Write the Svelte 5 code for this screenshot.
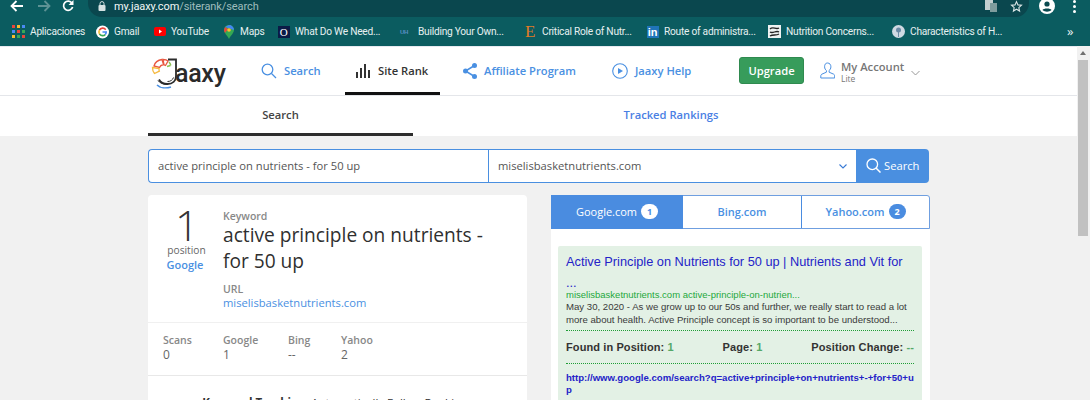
<script>
  const bookmarks = [
    { key: 'apps', label: 'Aplicaciones', w: 84 },
    { key: 'gmail', label: 'Gmail', w: 57 },
    { key: 'yt', label: 'YouTube', w: 69 },
    { key: 'maps', label: 'Maps', w: 55 },
    { key: 'o', label: 'What Do We Need...', w: 123 },
    { key: 'uh', label: 'Building Your Own...', w: 124 },
    { key: 'e', label: 'Critical Role of Nutr...', w: 122 },
    { key: 'in', label: 'Route of administra...', w: 122 },
    { key: 'nc', label: 'Nutrition Concerns...', w: 124 },
    { key: 'ch', label: 'Characteristics of H...', w: 112 }
  ];
</script>

<div class="page">
  <div class="chrome">
    <div class="addr-row">
      <svg class="nav back" width="14" height="12" viewBox="0 0 14 12"><path d="M13 6H2M6.500 1 1.500 6l5 5" fill="none" stroke="#fff" stroke-width="1.800"/></svg>
      <svg class="nav fwd" width="14" height="12" viewBox="0 0 14 12"><path d="M1 6h11M7.500 1l5 5-5 5" fill="none" stroke="#5d9294" stroke-width="1.800"/></svg>
      <svg class="nav reload" width="12" height="12" viewBox="0 0 12 12"><path d="M10 3.200A4.600 4.600 0 1 0 10.600 7" fill="none" stroke="#fff" stroke-width="1.700"/><path d="M11.500 0v5h-5z" fill="#fff"/></svg>
      <div class="omnibox">
        <svg width="8" height="10" viewBox="0 0 8 10"><rect x="0.500" y="4" width="7" height="6" rx="1" fill="#d5e2e2"/><path d="M2 4V2.600a2 2 0 0 1 4 0V4" fill="none" stroke="#d5e2e2"/></svg>
        <span class="url"><b>my.jaaxy.com</b>/siterank/search</span>
        <span class="spacer"></span>
        <svg class="translate" width="12" height="12" viewBox="0 0 12 12"><rect width="8" height="10" fill="#c3cfcf"/><rect x="5" y="3" width="7" height="9" fill="#7f9c9d"/></svg>
        <svg class="star" width="13" height="13" viewBox="0 0 24 24"><path d="m12 3 2.700 6 6.500.7-4.900 4.300 1.400 6.400L12 17l-5.700 3.400L7.700 14 2.800 9.700 9.300 9z" fill="none" stroke="#dbe6e6" stroke-width="2"/></svg>
      </div>
      <svg class="avatar" width="16" height="16" viewBox="0 0 16 16"><circle cx="8" cy="8" r="8" fill="#fff"/><circle cx="8" cy="6" r="2.600" fill="#0a4a50"/><path d="M3.500 12c1-2 8-2 9 0-2.500 2.200-6.500 2.200-9 0z" fill="#0a4a50"/></svg>
      <span class="dots"><i></i><i></i><i></i></span>
    </div>
    <div class="bm-row">
      {#each bookmarks as b}
        <div class="bm" style="width:{b.w}px">
          <span class="ico">
          {#if b.key === 'apps'}
            <svg width="13" height="13" viewBox="0 0 13 13"><g><rect x="0" y="0" width="3" height="3" fill="#e8453c"/><rect x="5" y="0" width="3" height="3" fill="#f9bb2d"/><rect x="10" y="0" width="3" height="3" fill="#4a8af4"/><rect x="0" y="5" width="3" height="3" fill="#4a8af4"/><rect x="5" y="5" width="3" height="3" fill="#e8453c"/><rect x="10" y="5" width="3" height="3" fill="#3aa757"/><rect x="0" y="10" width="3" height="3" fill="#f9bb2d"/><rect x="5" y="10" width="3" height="3" fill="#3aa757"/><rect x="10" y="10" width="3" height="3" fill="#e8453c"/></g></svg>
          {:else if b.key === 'gmail'}
            <svg width="14" height="14" viewBox="0 0 14 14"><circle cx="7" cy="7" r="7" fill="#fff"/><path d="M10.500 4.500A4 4 0 0 0 3.700 5" fill="none" stroke="#e8453c" stroke-width="1.700"/><path d="M3.700 5a4 4 0 0 0 0 4" fill="none" stroke="#f9bb2d" stroke-width="1.700"/><path d="M3.700 9a4 4 0 0 0 6.400.6" fill="none" stroke="#34a853" stroke-width="1.700"/><path d="M7 7h4c0 1-.4 2-1 2.700" fill="none" stroke="#4285f4" stroke-width="1.700"/></svg>
          {:else if b.key === 'yt'}
            <svg width="12" height="9" viewBox="0 0 12 9"><rect width="12" height="9" rx="2" fill="#f00"/><path d="m5 2.500 3 2-3 2z" fill="#fff"/></svg>
          {:else if b.key === 'maps'}
            <svg width="10" height="14" viewBox="0 0 10 14"><path d="M5 0a5 5 0 0 1 5 5c0 3-3 5-5 9-2-4-5-6-5-9a5 5 0 0 1 5-5z" fill="#34a853"/><path d="M5 0a5 5 0 0 1 5 5L1 2z" fill="#4285f4"/><path d="M1 2 0 5c0 1 .5 2 1 3l3-4z" fill="#e8453c"/><circle cx="5" cy="5" r="1.800" fill="#fbc02d"/></svg>
          {:else if b.key === 'o'}
            <span class="fav-o">O</span>
          {:else if b.key === 'uh'}
            <span class="fav-uh">UH</span>
          {:else if b.key === 'e'}
            <span class="fav-e">E</span>
          {:else if b.key === 'in'}
            <span class="fav-in">in</span>
          {:else if b.key === 'nc'}
            <svg width="13" height="13" viewBox="0 0 13 13"><rect width="13" height="13" fill="#eef2f2"/><path d="M2 4c3-3 6 1 9-1M2 7c3 2 6-2 9 0M2 11c3-2 6 0 9-2" fill="none" stroke="#222" stroke-width="1.300"/></svg>
          {:else}
            <svg width="13" height="13" viewBox="0 0 13 13"><circle cx="6.500" cy="6.500" r="6.500" fill="#cfd9e2"/><circle cx="6.500" cy="5" r="2.500" fill="#6a8aa5"/><path d="M6.500 7v5" stroke="#6a8aa5"/></svg>
          {/if}
          </span>
          <span>{b.label}</span>
        </div>
      {/each}
      <span class="more">»</span>
    </div>
  </div>

  <div class="viewport">
    <div class="content">
      <header class="topbar">
        <div class="wrap nav-wrap">
          <div class="logo">
            <svg width="32" height="32" viewBox="0 0 32 32">
              <path d="M3 8C4 4 7 2 11 1.500l1.500 5C10 7 9 8 8.500 9.500z" fill="#fff" stroke="#e9573f" stroke-width="1.300"/>
              <path d="M12 1.500c2 0 4 .5 5 1.500l-2.500 4.500-1.500-.8z" fill="#fff" stroke="#e9573f" stroke-width="1.300"/>
              <path d="M1.500 9.500 8 10.500c0 1 0 2 .3 2.600L3.500 15.500C2 14 1.500 12 1.500 9.500z" fill="#fff" stroke="#f5b83d" stroke-width="1.300"/>
              <path d="M18 4c1 1 1.500 2 1.800 3.500M16 8.500l3.500-1" fill="none" stroke="#8cc152" stroke-width="1.500"/>
              <path d="M17 1.500h8V18c0 5-3.500 8-8.500 8-4 0-7-1.500-8.500-4.500" fill="none" stroke="#2b2b2b" stroke-width="1.800"/>
              <path d="M7 22.500c1.500 2.300 5 4 9.500 4M16.500 23.500c3 0 5-1.300 6-4" fill="none" stroke="#2b2b2b" stroke-width="1"/>
              <path d="M6 27c3 3 9 3.500 14 2" fill="none" stroke="#4a90e2" stroke-width="1.500"/>
            </svg>
            <span class="logo-text">aaxy</span>
          </div>
          <a class="nav-link search-link">
            <svg width="16" height="16" viewBox="0 0 16 16"><circle cx="6.500" cy="6.500" r="5.300" fill="none" stroke="#4a90e2" stroke-width="1.300"/><path d="m10.500 10.500 4.500 4.500" stroke="#4a90e2" stroke-width="1.300"/></svg>
            Search
          </a>
          <a class="nav-link rank-link active">
            <svg width="15" height="15" viewBox="0 0 15 15"><path d="M1 9h2v6H1zM5 5h2v10H5zM9 1h2v14H9zM13 7h2v8h-2z" fill="#333"/></svg>
            Site Rank
          </a>
          <a class="nav-link aff-link">
            <svg width="14" height="16" viewBox="0 0 14 16"><circle cx="11.500" cy="2.500" r="2.500" fill="#4a90e2"/><circle cx="2.500" cy="8" r="2.500" fill="#4a90e2"/><circle cx="11.500" cy="13.500" r="2.500" fill="#4a90e2"/><path d="M11.500 2.500 2.500 8l9 5.500" fill="none" stroke="#4a90e2" stroke-width="1.500"/></svg>
            Affiliate Program
          </a>
          <a class="nav-link help-link">
            <svg width="16" height="16" viewBox="0 0 16 16"><circle cx="8" cy="8" r="7.300" fill="none" stroke="#4a90e2" stroke-width="1.100"/><path d="m6 5 5 3-5 3z" fill="#4a90e2"/></svg>
            Jaaxy Help
          </a>
          <button class="upgrade">Upgrade</button>
          <div class="account">
            <svg width="15" height="17" viewBox="0 0 15 17"><path d="M7.500 1c2.200 0 3.400 1.700 3.400 3.800 0 1.700-.8 3-1.800 3.700v1.700l4.600 2c.8.400 1 1 1 1.500v2.300H.8v-2.300c0-.5.200-1.100 1-1.500l4.600-2V8.500c-1-.7-1.800-2-1.800-3.700C4.600 2.700 5.300 1 7.500 1z" fill="none" stroke="#4a90e2" stroke-width="1"/></svg>
            <div class="acct-text"><span class="acct-name">My Account</span><span class="acct-lite">Lite</span></div>
            <svg class="chev" width="9" height="6" viewBox="0 0 9 6"><path d="m.5 1 4 4 4-4" fill="none" stroke="#999"/></svg>
          </div>
        </div>
      </header>

      <div class="tabs">
        <div class="wrap tabs-wrap">
          <div class="tab on">Search</div>
          <div class="tab link">Tracked Rankings</div>
        </div>
      </div>

      <main class="wrap main">
        <div class="searchbar">
          <div class="kw-input">active principle on nutrients - for 50 up</div>
          <div class="site-select">
            <span>miselisbasketnutrients.com</span>
            <svg width="8" height="5" viewBox="0 0 8 5"><path d="m.5.500 3.500 3.500L7.500.500" fill="none" stroke="#3a7bd5" stroke-width="1.100"/></svg>
          </div>
          <button class="search-btn">
            <svg width="15" height="15" viewBox="0 0 15 15"><circle cx="6.300" cy="6.300" r="5.300" fill="none" stroke="#fff" stroke-width="1.300"/><path d="m10 10 4.500 4.500" stroke="#fff" stroke-width="1.500"/></svg>
            Search
          </button>
        </div>

        <div class="columns">
          <section class="card left">
            <div class="summary">
              <div class="rank">
                <div class="big">1</div>
                <div class="pos">position</div>
                <div class="eng">Google</div>
              </div>
              <div class="kw">
                <div class="lbl">Keyword</div>
                <div class="kw-title">active principle on nutrients - for 50 up</div>
                <div class="lbl url-lbl">URL</div>
                <a class="kw-url">miselisbasketnutrients.com</a>
              </div>
            </div>
            <div class="stats">
              <div class="stat s1"><span class="lbl">Scans</span><span class="val">0</span></div>
              <div class="stat s2"><span class="lbl">Google</span><span class="val">1</span></div>
              <div class="stat s3"><span class="lbl">Bing</span><span class="val">--</span></div>
              <div class="stat"><span class="lbl">Yahoo</span><span class="val">2</span></div>
            </div>
            <div class="tracking"><b>Keyword Tracking:</b> Automatically Follow Rankings</div>
          </section>

          <section class="right">
            <div class="engines">
              <div class="eng-tab sel">Google.com <span class="badge w">1</span></div>
              <div class="eng-tab bing">Bing.com</div>
              <div class="eng-tab yahoo">Yahoo.com <span class="badge b">2</span></div>
            </div>
            <div class="result-card">
              <div class="result">
                <a class="r-title">Active Principle on Nutrients for 50 up | Nutrients and Vit for ...</a>
                <div class="r-cite">miselisbasketnutrients.com active-principle-on-nutrien...</div>
                <div class="r-desc">May 30, 2020 - As we grow up to our 50s and further, we really start to read a lot more about health. Active Principle concept is so important to be understood...</div>
                <div class="r-meta">
                  <span>Found in Position: <em>1</em></span>
                  <span>Page: <em>1</em></span>
                  <span>Position Change: <em>--</em></span>
                </div>
                <a class="r-link">http://www.google.com/search?q=active+principle+on+nutrients+-+for+50+up</a>
              </div>
            </div>
          </section>
        </div>
      </main>
    </div>
    <div class="scrollbar">
      <div class="arrow"></div>
      <div class="thumb"></div>
    </div>
  </div>
</div>

<style>
  :global(body) { margin: 0; background: #f1f1f1; }
  .page { width: 1090px; height: 400px; overflow: hidden; font-family: "Open Sans", sans-serif; }
  .chrome { height: 46px; background: #0b5c60; }
  .addr-row { height: 17px; display: flex; align-items: center; }
  .nav { flex: none; margin-top: -5px; }
  .back { margin-left: 10px; }
  .fwd { margin-left: 13px; }
  .reload { margin-left: 11px; }
  .omnibox { margin-left: 14px; width: 941px; height: 17px; background: #0a474e; border-radius: 0 0 14px 14px; display: flex; align-items: center; padding-left: 10px; box-sizing: border-box; flex: none; }
  .omnibox svg { margin-top: -5px; flex: none; }
  .url { margin-left: 8px; margin-top: -4px; font: 11px/12px "Roboto", sans-serif; letter-spacing: -.1px; color: #9fbcbd; }
  .url b { color: #f2f7f7; font-weight: 400; }
  .spacer { flex: 1; }
  .translate { margin-right: 13px; }
  .star { margin-right: 6px; }
  .avatar { margin-left: 10px; margin-top: -5px; flex: none; }
  .dots { margin-left: 18px; margin-top: -5px; display: flex; flex-direction: column; gap: 2px; }
  .dots i { width: 3px; height: 3px; border-radius: 50%; background: #fff; display: block; }

  .bm-row { height: 29px; display: flex; align-items: center; padding-left: 12px; position: relative; }
  .bm { display: flex; align-items: center; gap: 5px; font: 10.200px/14px "Roboto", "Liberation Sans", sans-serif; letter-spacing: -.25px; color: #e6f0f0; white-space: nowrap; flex: none; }
  .ico { width: 13px; height: 14px; display: flex; align-items: center; justify-content: center; flex: none; }
  .fav-o { width: 12px; height: 12px; background: #0b1b46; color: #fff; font: 11px/12px "Liberation Serif", serif; text-align: center; flex: none; }
  .fav-uh { width: 13px; font: 700 6px/12px "Liberation Sans", sans-serif; color: #5b8fc4; flex: none; }
  .fav-e { width: 11px; color: #e07b26; font: 17px/14px "Liberation Serif", serif; flex: none; }
  .fav-in { width: 12px; height: 12px; background: #1f74b8; color: #fff; font: 700 11px/12px "Liberation Sans", sans-serif; text-align: center; flex: none; }
  .more { position: absolute; left: 1067px; top: 6px; color: #e6f0f0; font-size: 13px; line-height: 16px; }

  .viewport { display: flex; height: 354px; overflow: hidden; }
  .content { width: 1077px; flex: none; }
  .scrollbar { width: 13px; background: #f1f1f1; flex: none; padding: 5px 2px 0 1px; box-sizing: border-box; }
  .arrow { width: 0; height: 0; border: 3px solid transparent; border-bottom: 4px solid #707070; border-top: 0; margin: 0 auto 5px; }
  .thumb { height: 176px; background: #c1c1c1; }

  .wrap { width: 781px; margin-left: 148px; box-sizing: border-box; }
  .topbar { height: 49px; background: #fff; border-bottom: 1px solid #e4e6ea; box-shadow: inset 0 1px 0 #e7e9f0; }
  .nav-wrap { display: flex; height: 49px; align-items: center; width: 790px; }
  .logo { display: flex; align-items: flex-end; width: 76px; height: 36px; flex: none; margin-top: 2px; }
  .logo svg { flex: none; margin-left: 3px; }
  .logo-text { font: 500 25px/26px "Roboto", sans-serif; color: #2a2a2a; margin-left: -8px; margin-bottom: 3px; letter-spacing: -.3px; }
  .nav-link { display: flex; align-items: center; font-size: 11.200px; font-weight: 600; color: #4a90e2; white-space: nowrap; flex: none; }
  .search-link { margin-left: 37px; gap: 7px; width: 84px; }
  .rank-link { color: #333; gap: 6px; height: 49px; width: 95px; padding-left: 10px; box-sizing: border-box; border-bottom: 3px solid #111; padding-top: 2px; }
  .rank-link svg { margin-right: 2px; }
  .aff-link { margin-left: 23px; gap: 7px; width: 149px; }
  .help-link { gap: 7px; width: 127px; }
  .upgrade { width: 65px; height: 27px; flex: none; background: #379c5b; border: 1px solid #2f8a4f; border-radius: 3px; color: #fff; font: 600 11.200px "Open Sans", sans-serif; padding: 0; }
  .account { display: flex; align-items: center; margin-left: 16px; flex: none; }
  .acct-text { margin-left: 6px; display: flex; flex-direction: column; width: 70px; white-space: nowrap; margin-top: 2px; }
  .acct-name { font-size: 11.200px; line-height: 13px; color: #777; font-weight: 600; }
  .acct-lite { font-size: 8.500px; line-height: 10px; color: #777; margin-top: 1px; }
  .chev { margin-top: 5px; }

  .tabs { height: 40px; background: #fff; }
  .tabs-wrap { display: flex; height: 40px; }
  .tab { font-size: 11.200px; font-weight: 600; display: flex; align-items: center; justify-content: center; box-sizing: border-box; }
  .tab.on { width: 265px; color: #444; border-bottom: 3px solid #2d2d2d; }
  .tab.link { width: 516px; color: #4a80e4; padding-bottom: 3px; }

  .main { padding-top: 13px; }
  .searchbar { display: flex; height: 34px; }
  .kw-input { width: 340px; box-sizing: border-box; background: #fff; border: 1px solid #4a8fe0; border-right: 0; border-radius: 4px 0 0 4px; padding-left: 9px; font-size: 11.200px; line-height: 31px; color: #555; }
  .site-select { width: 368px; box-sizing: border-box; background: #fff; border: 1px solid #4a8fe0; border-width: 1px 0 1px 1px; padding: 0 9px 0 9px; display: flex; align-items: center; justify-content: space-between; font-size: 11.200px; color: #555; }
  .site-select span { margin-top: -1px; }
  .search-btn { width: 73px; background: #4a8fe0; border: 0; border-radius: 0 4px 4px 0; color: #fff; font: 400 11.200px "Open Sans", sans-serif; display: flex; align-items: center; gap: 3px; padding: 0 0 2px 10px; }

  .columns { display: flex; justify-content: space-between; margin-top: 12px; width: 782px; }
  .card.left { width: 379px; height: 260px; background: #fff; border-radius: 4px 4px 0 0; flex: none; }
  .summary { display: flex; height: 127px; border-bottom: 1px solid #f0f0f0; }
  .rank { width: 75px; flex: none; text-align: center; padding: 13px 0 0 2px; box-sizing: border-box; }
  .big { font: 300 42px/33px "Open Sans", sans-serif; color: #333; margin-left: 1px; }
  .pos { font-size: 10.200px; line-height: 14px; color: #666; margin-top: 2px; }
  .eng { font-size: 11px; line-height: 16px; color: #4a90e2; font-weight: 600; margin-left: -3px; }
  .kw { padding-top: 15px; width: 262px; }
  .lbl { font-size: 10.500px; line-height: 13px; color: #888; font-weight: 600; }
  .kw-title { font-size: 19.150px; line-height: 26px; color: #2f2f2f; margin-top: -1px; }
  .url-lbl { margin-top: 9px; }
  .kw-url { display: block; font-size: 11.200px; line-height: 14px; color: #4a90e2; }
  .stats { display: flex; height: 53px; border-bottom: 1px solid #e8e8e8; padding: 11px 0 0 15px; box-sizing: border-box; }
  .stat { display: flex; flex-direction: column; }
  .s1 { width: 60px; } .s2 { width: 65px; } .s3 { width: 53px; }
  .stat .val { font-size: 12px; line-height: 15px; color: #666; }
  .tracking { text-align: center; font-size: 11.500px; line-height: 14px; color: #333; margin-top: 20px; }
  .tracking b { font-weight: 700; }

  .right { width: 379px; flex: none; }
  .engines { display: flex; height: 34px; background: #fff; border: 1px solid #6f9fe0; border-radius: 3px 3px 0 0; box-sizing: border-box; }
  .eng-tab { font-size: 11px; font-weight: 600; color: #4a90e2; display: flex; align-items: center; justify-content: center; gap: 4px; box-sizing: border-box; padding-bottom: 1px; }
  .sel { width: 132px; background: #4a8ce0; color: #fff; font-weight: 400; margin: -1px 0 -1px -1px; }
  .bing { width: 119px; border-right: 1px solid #4a8ce0; }
  .yahoo { flex: 1; }
  .badge { width: 17px; height: 15px; border-radius: 8px; font-size: 9px; font-weight: 700; line-height: 15px; text-align: center; }
  .badge.w { background: #fff; color: #4a8ce0; }
  .badge.b { background: #4a8ce0; color: #fff; }
  .result-card { background: #fff; padding: 17px 8px 0 7px; height: 172px; box-sizing: border-box; }
  .result { background: #e3f1e5; border-radius: 2px; padding: 5px 8px; height: 200px; box-sizing: border-box; font-family: "Liberation Sans", sans-serif; }
  .r-title { display: block; width: 346px; font-size: 12.770px; line-height: 21px; color: #2323c8; }
  .r-cite { font-size: 9.500px; line-height: 12px; color: #1ea83c; margin-top: -4px; white-space: nowrap; }
  .r-desc { width: 348px; font-size: 9.600px; line-height: 12.500px; color: #3a3a3a; padding-bottom: 4px; border-bottom: 1px dotted #1e9e35; }
  .r-meta { width: 348px; display: flex; justify-content: space-between; height: 33px; align-items: center; font-size: 11px; font-weight: 700; color: #333; border-bottom: 1px dotted #1e9e35; box-sizing: border-box; letter-spacing: .1px; }
  .r-meta em { font-style: normal; color: #55a868; }
  .r-link { display: block; width: 348px; margin-top: 8px; font-size: 9.600px; line-height: 12px; font-weight: 700; color: #2323c8; word-break: break-all; }
</style>
